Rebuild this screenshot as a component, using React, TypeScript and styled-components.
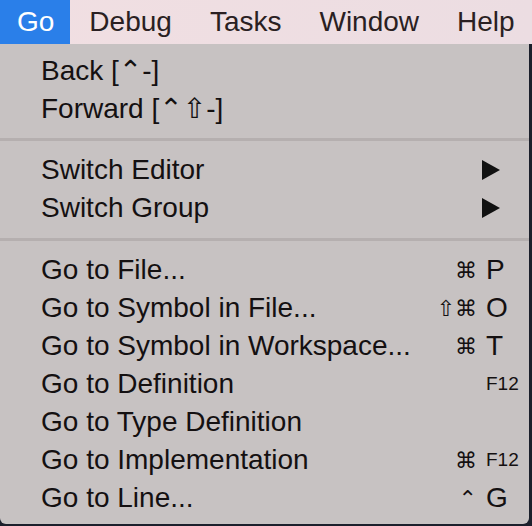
import React from 'react';
import styled, { createGlobalStyle } from 'styled-components';

const GlobalStyle = createGlobalStyle`
  html, body {
    margin: 0;
    padding: 0;
    background: #1b1f2b;
    width: 532px;
    height: 526px;
    overflow: hidden;
  }
  body {
    font-family: "Liberation Sans", "DejaVu Sans", Arial, sans-serif;
  }
`;

const Screen = styled.div`
  width: 532px;
  height: 526px;
  display: flex;
  flex-direction: column;
`;

const MenuBar = styled.div`
  height: 44px;
  display: flex;
  align-items: stretch;
  background: linear-gradient(90deg, #f1dfe2, #ecdde2);
  flex-shrink: 0;
`;

const BarItem = styled.div<{ $active?: boolean }>`
  display: flex;
  align-items: center;
  padding: ${(p) => (p.$active ? '0 16px 0 17px' : '0 19px')};
  font-size: 28px;
  color: ${(p) => (p.$active ? '#ffffff' : '#2a1f22')};
  background: ${(p) => (p.$active ? '#2a7fe9' : 'transparent')};
`;

const Panel = styled.div`
  width: 529px;
  height: 480px;
  box-sizing: border-box;
  padding: 7px 0;
  background: #c7c2c2;
  border-radius: 0 0 6px 6px;
  display: flex;
  flex-direction: column;
`;

const Row = styled.div`
  height: 38px;
  display: flex;
  align-items: center;
  padding: 0 9px 0 41px;
  font-size: 28px;
  color: #141011;
  white-space: nowrap;
`;

const Label = styled.span`
  flex: 1;
`;

const Separator = styled.div`
  height: 24px;
  display: flex;
  align-items: center;

  &::after {
    content: '';
    display: block;
    width: 100%;
    height: 3px;
    background: #b5afaf;
  }
`;

const Shortcut = styled.span`
  display: flex;
  align-items: center;
`;

const Mods = styled.span`
  display: inline-block;
  text-align: right;
  font-family: "DejaVu Sans", "Liberation Sans", sans-serif;
  font-size: 22px;
  margin-right: 9px;
`;

const Key = styled.span<{ $small?: boolean }>`
  display: inline-block;
  width: 34px;
  text-align: left;
  font-size: ${(p) => (p.$small ? '19px' : '28px')};
`;

const Arrow = styled.svg`
  width: 18px;
  height: 20px;
  margin-right: 20px;
`;

type Item =
  | { kind: 'sep' }
  | { kind: 'item'; label: string; mods?: string; key?: string; small?: boolean; submenu?: boolean };

const items: Item[] = [
  { kind: 'item', label: 'Back [⌃-]' },
  { kind: 'item', label: 'Forward [⌃⇧-]' },
  { kind: 'sep' },
  { kind: 'item', label: 'Switch Editor', submenu: true },
  { kind: 'item', label: 'Switch Group', submenu: true },
  { kind: 'sep' },
  { kind: 'item', label: 'Go to File...', mods: '⌘', key: 'P' },
  { kind: 'item', label: 'Go to Symbol in File...', mods: '⇧⌘', key: 'O' },
  { kind: 'item', label: 'Go to Symbol in Workspace...', mods: '⌘', key: 'T' },
  { kind: 'item', label: 'Go to Definition', key: 'F12', small: true },
  { kind: 'item', label: 'Go to Type Definition' },
  { kind: 'item', label: 'Go to Implementation', mods: '⌘', key: 'F12', small: true },
  { kind: 'item', label: 'Go to Line...', mods: '⌃', key: 'G' },
];

const App: React.FC = () => {
  return (
    <>
      <GlobalStyle />
      <Screen>
        <MenuBar>
          <BarItem $active>Go</BarItem>
          <BarItem>Debug</BarItem>
          <BarItem>Tasks</BarItem>
          <BarItem>Window</BarItem>
          <BarItem>Help</BarItem>
        </MenuBar>
        <Panel>
          {items.map((item, i) =>
            item.kind === 'sep' ? (
              <Separator key={i} />
            ) : (
              <Row key={i}>
                <Label>{item.label}</Label>
                {item.submenu && (
                  <Arrow viewBox="0 0 18 20">
                    <path d="M0 0 L18 10 L0 20 Z" fill="#111" />
                  </Arrow>
                )}
                {item.key && (
                  <Shortcut>
                    <Mods>{item.mods}</Mods>
                    <Key $small={item.small}>{item.key}</Key>
                  </Shortcut>
                )}
              </Row>
            )
          )}
        </Panel>
      </Screen>
    </>
  );
};

export default App;
